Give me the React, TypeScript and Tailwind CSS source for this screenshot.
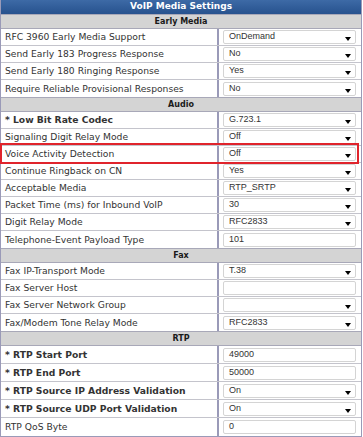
import React from 'react'

type Row = {
  label: string
  value?: string
  kind: 'select' | 'input'
  bold?: boolean
}

type Section = { title: string; tall?: boolean; rows: Row[] }

const sections: Section[] = [
  {
    title: 'Early Media',
    rows: [
      { label: 'RFC 3960 Early Media Support', value: 'OnDemand', kind: 'select' },
      { label: 'Send Early 183 Progress Response', value: 'No', kind: 'select' },
      { label: 'Send Early 180 Ringing Response', value: 'Yes', kind: 'select' },
      { label: 'Require Reliable Provisional Responses', value: 'No', kind: 'select' },
    ],
  },
  {
    title: 'Audio',
    rows: [
      { label: '* Low Bit Rate Codec', value: 'G.723.1', kind: 'select', bold: true },
      { label: 'Signaling Digit Relay Mode', value: 'Off', kind: 'select' },
      { label: 'Voice Activity Detection', value: 'Off', kind: 'select' },
      { label: 'Continue Ringback on CN', value: 'Yes', kind: 'select' },
      { label: 'Acceptable Media', value: 'RTP_SRTP', kind: 'select' },
      { label: 'Packet Time (ms) for Inbound VoIP', value: '30', kind: 'select' },
      { label: 'Digit Relay Mode', value: 'RFC2833', kind: 'select' },
      { label: 'Telephone-Event Payload Type', value: '101', kind: 'input' },
    ],
  },
  {
    title: 'Fax',
    rows: [
      { label: 'Fax IP-Transport Mode', value: 'T.38', kind: 'select' },
      { label: 'Fax Server Host', value: '', kind: 'input' },
      { label: 'Fax Server Network Group', value: '', kind: 'select' },
      { label: 'Fax/Modem Tone Relay Mode', value: 'RFC2833', kind: 'select' },
    ],
  },
  {
    title: 'RTP',
    tall: true,
    rows: [
      { label: '* RTP Start Port', value: '49000', kind: 'input', bold: true },
      { label: '* RTP End Port', value: '50000', kind: 'input', bold: true },
      { label: '* RTP Source IP Address Validation', value: 'On', kind: 'select', bold: true },
      { label: '* RTP Source UDP Port Validation', value: 'On', kind: 'select', bold: true },
      { label: 'RTP QoS Byte', value: '0', kind: 'input' },
    ],
  },
]

const Field = ({ row }: { row: Row }) => (
  <div className="relative flex h-[14px] w-[133px] items-center rounded-[2px] border border-[#d4d4d4] bg-white pl-[5px] font-['Liberation_Sans',Arial,sans-serif] text-[9px] text-[#333]">
    {row.value}
    {row.kind === 'select' && (
      <span className="absolute right-[4px] top-[6px] h-0 w-0 border-x-[3.5px] border-t-[4px] border-x-transparent border-t-black" />
    )}
  </div>
)

export default function App() {
  return (
    <div className="relative w-[363px] bg-white font-['DejaVu_Sans',Verdana,sans-serif]">
      <div className="w-[362px] border-x border-b border-[#9a9ab8]">
        <div className="flex h-[14px] items-center justify-center bg-gradient-to-b from-[#3d6aa6] to-[#27528e] text-[9px] font-bold text-white">
          VoIP Media Settings
        </div>
        {sections.map((s) => (
          <div key={s.title}>
            <div className="flex h-[15px] items-center justify-center border-y border-[#a8a8b8] bg-[#d4d4d4] text-[8px] font-bold text-[#1a1a1a]">
              {s.title}
            </div>
            {s.rows.map((r, i) => (
              <div
                key={r.label}
                className={`flex ${s.tall ? 'h-[18px]' : 'h-[17px]'} ${i < s.rows.length - 1 ? 'border-b border-[#c4c4cc]' : ''}`}
              >
                <div
                  className={`flex w-[218px] items-center border-r-2 border-[#9a9ab8] pl-[4px] text-[9.2px] text-[#333] ${r.bold ? 'font-bold text-[#222]' : ''}`}
                >
                  <span className="whitespace-nowrap">{r.label}</span>
                </div>
                <div className="flex flex-1 items-center pl-[4px]">
                  <Field row={r} />
                </div>
              </div>
            ))}
          </div>
        ))}
      </div>
      {/* highlighted row */}
      <div className="absolute left-0 top-[143px] h-[21px] w-[359px] border-2 border-[#e0242c]" />
    </div>
  )
}
